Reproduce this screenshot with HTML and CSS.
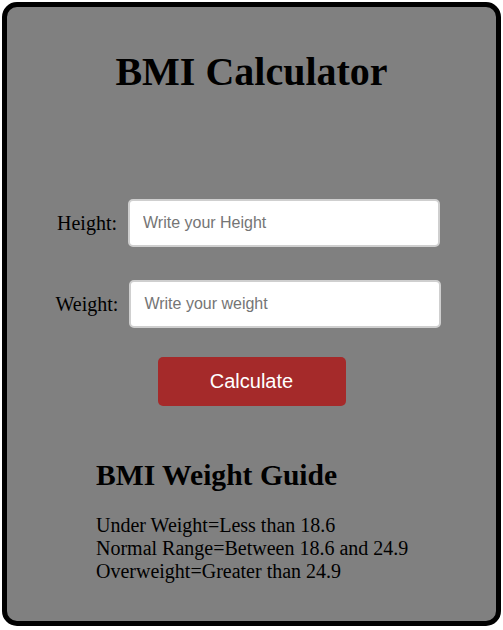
FILE: index.html
```html
<!DOCTYPE html>
<html>
<head>
<meta charset="utf-8">
<title>BMI Calculator</title>
<link rel="stylesheet" href="styles.css">
</head>
<body>
<div class="card">
  <h1 class="title">BMI Calculator</h1>
  <div class="form">
    <div class="row">
      <label class="label" for="h">Height:</label>
      <input class="field" id="h" type="text" placeholder="Write your Height">
    </div>
    <div class="row row-weight">
      <label class="label" for="w">Weight:</label>
      <input class="field" id="w" type="text" placeholder="Write your weight">
    </div>
    <div class="actions">
      <button class="btn" type="button">Calculate</button>
    </div>
  </div>
  <div class="guide">
    <h2 class="guide-title">BMI Weight Guide</h2>
    <p class="guide-text">Under Weight=Less than 18.6<br>Normal Range=Between 18.6 and 24.9<br>Overweight=Greater than 24.9</p>
  </div>
</div>
</body>
</html>
```

FILE: styles.css
```css
* { box-sizing: border-box; }
html, body { margin: 0; padding: 0; background: #ffffff; }
body { font-family: "Liberation Serif", "Times New Roman", serif; }

.card {
  margin: 2px 2px 0 2px;
  width: 499px;
  height: 624px;
  border: 5px solid #000;
  border-radius: 15px;
  background: #808080;
  padding-top: 41px;
}

.title {
  margin: 0;
  text-align: center;
  font-size: 40px;
  font-weight: bold;
  color: #000;
}

.form {
  margin-top: 104px;
}

.row {
  display: flex;
  align-items: center;
  justify-content: center;
  gap: 11px;
  padding-right: 6px;
  margin-bottom: 33px;
}

.label {
  font-size: 20px;
  color: #000;
}

.field {
  width: 312px;
  height: 48px;
  border: 2px solid #cfcfcf;
  border-radius: 5px;
  background: #fff;
  padding: 0 13px;
  font-family: "Liberation Sans", Arial, sans-serif;
  font-size: 16px;
  color: #000;
  outline: none;
}
.field::placeholder { color: #757575; }

.row-weight { margin-bottom: 29px; }

.actions {
  display: flex;
  justify-content: center;
}

.btn {
  width: 188px;
  height: 49px;
  border: none;
  border-radius: 5px;
  background: #a52a2a;
  color: #fff;
  font-family: "Liberation Sans", Arial, sans-serif;
  font-size: 20px;
}

.guide {
  margin-top: 53px;
  padding-left: 89px;
}

.guide-title {
  margin: 0;
  font-size: 29.6px;
  font-weight: bold;
  color: #000;
}

.guide-text {
  margin: 22px 0 0 0;
  font-size: 20px;
  color: #000;
}
```
